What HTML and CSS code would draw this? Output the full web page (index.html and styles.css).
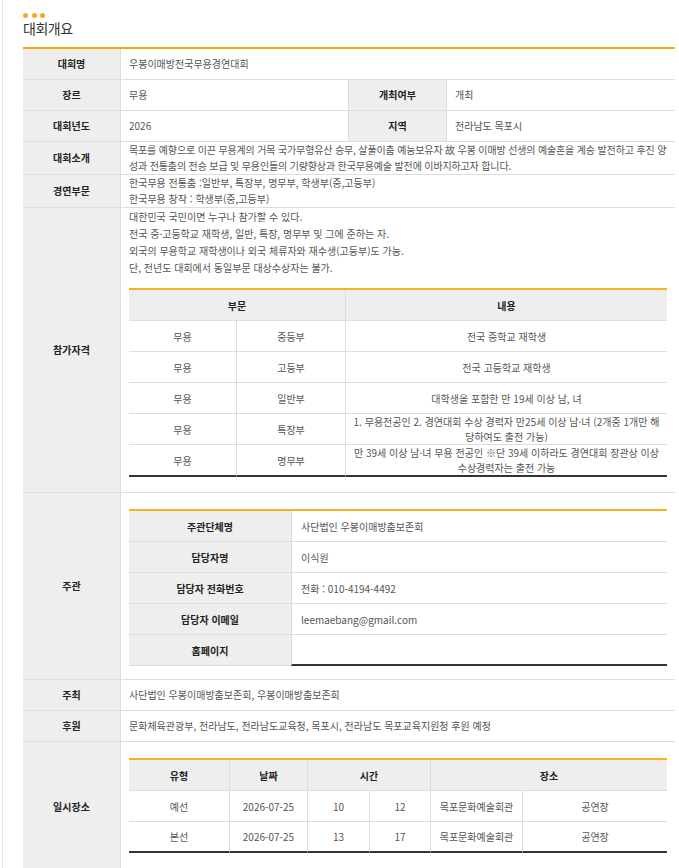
FILE: index.html
```html
<!DOCTYPE html>
<html lang="ko">
<head>
<meta charset="utf-8">
<title>대회개요</title>
<link rel="stylesheet" href="styles.css">
</head>
<body>
<div class="page">
  <div class="dots"><span></span><span></span><span></span></div>
  <h2 class="title">대회개요</h2>
  <table class="info">
    <colgroup><col class="c-l1"><col class="c-v1"><col class="c-l2"><col></colgroup>
    <tr><th>대회명</th><td colspan="3">우봉이매방전국무용경연대회</td></tr>
    <tr><th>장르</th><td>무용</td><th>개최여부</th><td>개최</td></tr>
    <tr><th>대회년도</th><td>2026</td><th>지역</th><td>전라남도 목포시</td></tr>
    <tr><th>대회소개</th><td colspan="3" class="intro">목포를 예향으로 이끈 무용계의 거목 국가무형유산 승무, 살풀이춤 예능보유자 故 우봉 이매방 선생의 예술혼을 계승 발전하고 후진 양성과 전통춤의 전승 보급 및 무용인들의 기량향상과 한국무용예술 발전에 이바지하고자 합니다.</td></tr>
    <tr><th>경연부문</th><td colspan="3">한국무용 전통춤 :일반부, 특장부, 명무부, 학생부(중,고등부)<br>한국무용 창작 : 학생부(중,고등부)</td></tr>
    <tr>
      <th>참가자격</th>
      <td colspan="3" class="box box-qual">
        <p class="qual">대한민국 국민이면 누구나 참가할 수 있다.<br>전국 중·고등학교 재학생, 일반, 특장, 명무부 및 그에 준하는 자.<br>외국의 무용학교 재학생이나 외국 체류자와 재수생(고등부)도 가능.<br>단, 전년도 대회에서 동일부문 대상수상자는 불가.</p>
        <table class="sub sub-center">
          <colgroup><col class="q1"><col class="q2"><col></colgroup>
          <tr><th colspan="2">부문</th><th>내용</th></tr>
          <tr><td>무용</td><td>중등부</td><td>전국 중학교 재학생</td></tr>
          <tr><td>무용</td><td>고등부</td><td>전국 고등학교 재학생</td></tr>
          <tr><td>무용</td><td>일반부</td><td>대학생을 포함한 만 19세 이상 남, 녀</td></tr>
          <tr><td>무용</td><td>특장부</td><td>1. 무용전공인 2. 경연대회 수상 경력자 만25세 이상 남·녀 (2개중 1개만 해<br>당하여도 출전 가능)</td></tr>
          <tr><td>무용</td><td>명무부</td><td>만 39세 이상 남·녀 무용 전공인 ※단 39세 이하라도 경연대회 장관상 이상<br>수상경력자는 출전 가능</td></tr>
        </table>
      </td>
    </tr>
    <tr>
      <th>주관</th>
      <td colspan="3" class="box box-host">
        <table class="sub sub-kv">
          <colgroup><col class="k1"><col></colgroup>
          <tr><th>주관단체명</th><td>사단법인 우봉이매방춤보존회</td></tr>
          <tr><th>담당자명</th><td>이식원</td></tr>
          <tr><th>담당자 전화번호</th><td>전화 : 010-4194-4492</td></tr>
          <tr><th>담당자 이메일</th><td>leemaebang@gmail.com</td></tr>
          <tr><th>홈페이지</th><td></td></tr>
        </table>
      </td>
    </tr>
    <tr><th>주최</th><td colspan="3">사단법인 우봉이매방춤보존회, 우봉이매방춤보존회</td></tr>
    <tr><th>후원</th><td colspan="3">문화체육관광부, 전라남도, 전라남도교육청, 목포시, 전라남도 목포교육지원청 후원 예정</td></tr>
    <tr>
      <th>일시장소</th>
      <td colspan="3" class="box box-date">
        <table class="sub sub-center">
          <colgroup><col class="d1"><col class="d2"><col class="d3"><col class="d4"><col class="d5"><col></colgroup>
          <tr><th>유형</th><th>날짜</th><th colspan="2">시간</th><th colspan="2">장소</th></tr>
          <tr><td>예선</td><td>2026-07-25</td><td>10</td><td>12</td><td>목포문화예술회관</td><td>공연장</td></tr>
          <tr><td>본선</td><td>2026-07-25</td><td>13</td><td>17</td><td>목포문화예술회관</td><td>공연장</td></tr>
        </table>
      </td>
    </tr>
  </table>
</div>
</body>
</html>
```
FILE: styles.css
```css
html, body {
  margin: 0;
  padding: 0;
  background: #fff;
}

.page {
  margin-left: 2px;
  border-left: 1px solid #e6e6e6;
  padding: 13px 0 0 20px;
  min-height: 868px;
  font-family: "Noto Sans CJK KR", "Noto Sans", sans-serif;
}

.dots {
  display: flex;
  gap: 3.5px;
  height: 5px;
}

.dots span {
  width: 5px;
  height: 5px;
  border-radius: 50%;
  background: #f5ab1f;
}

.title {
  margin: 2px 0 0;
  font-size: 14px;
  font-weight: 400;
  line-height: 16px;
  color: #333;
  letter-spacing: -0.5px;
}

.info {
  margin-top: 11px;
  width: 652px;
  border-spacing: 0;
  table-layout: fixed;
  border-top: 2px solid #f5ad00;
  font-size: 10px;
  letter-spacing: 0;
  color: #555;
}

.c-l1 { width: 97px; }
.c-v1 { width: 228px; }
.c-l2 { width: 98px; }

.info tr {
  height: 31px;
}

.info th,
.info td {
  border-bottom: 1px solid #ddd;
  line-height: 16px;
  vertical-align: middle;
}

.info th {
  background: #eee;
  color: #222;
  font-weight: 700;
  text-align: center;
  padding: 0;
}

.info td {
  text-align: left;
  padding: 0 8px;
}

.info td.intro {
  letter-spacing: -0.15px;
}

.info > tbody > tr > * + * {
  border-left: 1px solid #ddd;
}

.info td.box {
  padding: 0 8px;
}

.box-qual { padding-bottom: 15px !important; }
.box-host { padding-top: 16px !important; padding-bottom: 13px !important; }
.box-date { padding-top: 16px !important; padding-bottom: 18px !important; }

.qual {
  margin: 0 0 12px;
  line-height: 17px;
}

.sub {
  width: 100%;
  table-layout: fixed;
  border-spacing: 0;
  border-top: 2px solid #f5b324;
}

.info .sub th,
.info .sub td {
  line-height: 15px;
  border-bottom: 1px solid #ddd;
  border-left: 0;
}

.info .sub td {
  text-align: center;
  padding: 0 4px;
}

.info .sub tr > * + * {
  border-left: 1px solid #ddd;
}

.info .sub tr:last-child td {
  border-bottom: 2px solid #333;
}

.q1 { width: 107px; }
.q2 { width: 109px; }

.k1 { width: 162px; }

.info .sub-kv td {
  text-align: left;
  padding: 0 9px;
}

.d1 { width: 100px; }
.d2 { width: 78px; }
.d3 { width: 62px; }
.d4 { width: 61px; }
.d5 { width: 92px; }
```
